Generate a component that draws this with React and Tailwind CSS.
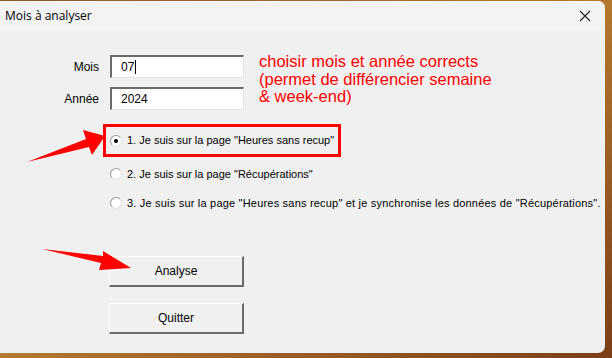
import React from "react";

const dlg = { fontFamily: '"Liberation Sans", Arial, sans-serif' };

function Radio({ checked }) {
  return (
    <span className="relative inline-block w-[12px] h-[12px] rounded-full bg-white border border-t-[#9a9a9a] border-l-[#9a9a9a] border-b-[#e0e0e0] border-r-[#e0e0e0] shrink-0">
      {checked && (
        <span className="absolute left-[3px] top-[3px] w-[4px] h-[4px] rounded-full bg-black" />
      )}
    </span>
  );
}

function Field({ label, value, caret }) {
  return (
    <div className="flex items-center">
      <span className="w-[99px] text-right text-[12px] text-black">{label}</span>
      <div className="ml-[11px] w-[134px] h-[23px] bg-white border-t-2 border-l-2 border-b border-r border-t-[#6a6a6a] border-l-[#6a6a6a] border-b-[#e3e3e3] border-r-[#e3e3e3] flex items-center pl-[9px] text-[12px] text-black">
        {value}
        {caret && <span className="w-px h-[14px] bg-black ml-[1px]" />}
      </div>
    </div>
  );
}

function Btn({ children }) {
  return (
    <div className="w-[135px] h-[31px] flex items-center justify-center bg-[#f0f0f0] border-t border-l border-b-2 border-r-2 border-t-white border-l-white border-b-[#6b6b6b] border-r-[#6b6b6b] text-[12px] text-black">
      {children}
    </div>
  );
}

export default function App() {
  return (
    <div className="w-[612px] h-[358px] bg-gradient-to-br from-[#8a5a2e] via-[#b5782f] to-[#7a3f18] overflow-hidden relative">
      <div className="w-[605px] h-[352px] mt-px bg-[#f0f0f0] rounded-r-[7px] flex flex-col" style={dlg}>
        <div className="h-[30px] bg-[#f3f3f3] rounded-tr-[7px] flex items-center justify-between pl-[5px] pr-[14px]">
          <span className="text-[12px] text-black" style={{ fontFamily: '"Open Sans", "Noto Sans", sans-serif' }}>
            Mois à analyser
          </span>
          <svg width="12" height="12" viewBox="0 0 12 12">
            <path d="M1 1 L11 11 M11 1 L1 11" stroke="#222" strokeWidth="1.1" />
          </svg>
        </div>

        <div className="flex mt-[24px]">
          <div className="flex flex-col gap-[9px]">
            <Field label="Mois" value="07" caret />
            <Field label="Année" value="2024" />
          </div>
          <div className="ml-[15px] -mt-[2px] text-[16.5px] leading-[17.5px] text-[#ff0000]">
            <p>choisir mois et année corrects</p>
            <p>(permet de différencier semaine</p>
            <p>&amp; week-end)</p>
          </div>
        </div>

        <div className="ml-[103px] mt-[14px] w-[238px] h-[33px] border-[3px] border-[#ff0000] flex items-center pl-[4px] gap-[5px] text-[11px] text-black">
          <Radio checked />
          <span>1. Je suis sur la page "Heures sans recup"</span>
        </div>
        <div className="ml-[110px] mt-[9px] flex items-center gap-[5px] text-[11px] text-black">
          <Radio />
          <span>2. Je suis sur la page "Récupérations"</span>
        </div>
        <div className="ml-[110px] mt-[12px] flex items-center gap-[5px] text-[11px] text-black">
          <Radio />
          <span className="tracking-[0.2px]">3. Je suis sur la page "Heures sans recup" et je synchronise les données de "Récupérations".</span>
        </div>

        <div className="ml-[109px] mt-[45px] flex flex-col gap-[16px]">
          <Btn>Analyse</Btn>
          <Btn>Quitter</Btn>
        </div>
      </div>

      <svg className="absolute left-0 top-0 pointer-events-none" width="612" height="358">
        <polygon points="27,162 86,139 83,130 105,136 92,155 89,147" fill="#ff0000" />
        <polygon points="42,249 103,256 103,251 131,268 99,270 101,263" fill="#ff0000" />
      </svg>
    </div>
  );
}
